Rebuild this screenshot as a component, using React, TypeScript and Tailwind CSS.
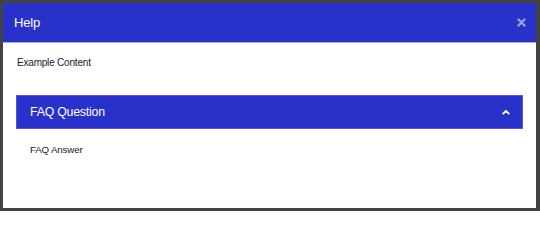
export default function App() {
  return (
    <div className="w-[540px] h-[211px] bg-[#434343] pt-[3px] pl-[3px] pr-[4px] pb-[3px] font-['Liberation_Sans',Arial,sans-serif]">
      <div className="flex h-full flex-col bg-white">
        <div className="flex h-[40px] shrink-0 items-center justify-between border-b border-[#a9acec] bg-[#2831c9] pl-[11px] pr-[10px]">
          <span className="text-[13px] tracking-[-0.2px] text-white">Help</span>
          <button className="flex h-[10px] w-[10px] items-center justify-center text-white/55">
            <svg width="9" height="9" viewBox="0 0 9 9">
              <path d="M1.5 1.5 L7.5 7.5 M7.5 1.5 L1.5 7.5" stroke="currentColor" strokeWidth="2.2" strokeLinecap="round" />
            </svg>
          </button>
        </div>
        <div className="px-[13px] pt-[13px]">
          <p className="pl-[1px] text-[10px] leading-[14px] tracking-[-0.2px] text-[#1a1a1a]">Example Content</p>
          <div className="mt-[25px]">
            <div className="flex h-[34px] items-center justify-between border border-[#5157d6] bg-[#2831c9] pl-[13px] pr-[12px]">
              <span className="text-[12.3px] tracking-[-0.2px] text-white">FAQ Question</span>
              <svg width="8" height="6" viewBox="0 0 8 6" className="text-white">
                <path d="M1.2 4.6 L4 1.8 L6.8 4.6" fill="none" stroke="currentColor" strokeWidth="1.9" strokeLinecap="round" strokeLinejoin="round" />
              </svg>
            </div>
            <p className="mt-[14px] pl-[14px] text-[9.8px] leading-[14px] tracking-[-0.2px] text-[#1a1a1a]">FAQ Answer</p>
          </div>
        </div>
      </div>
    </div>
  );
}
